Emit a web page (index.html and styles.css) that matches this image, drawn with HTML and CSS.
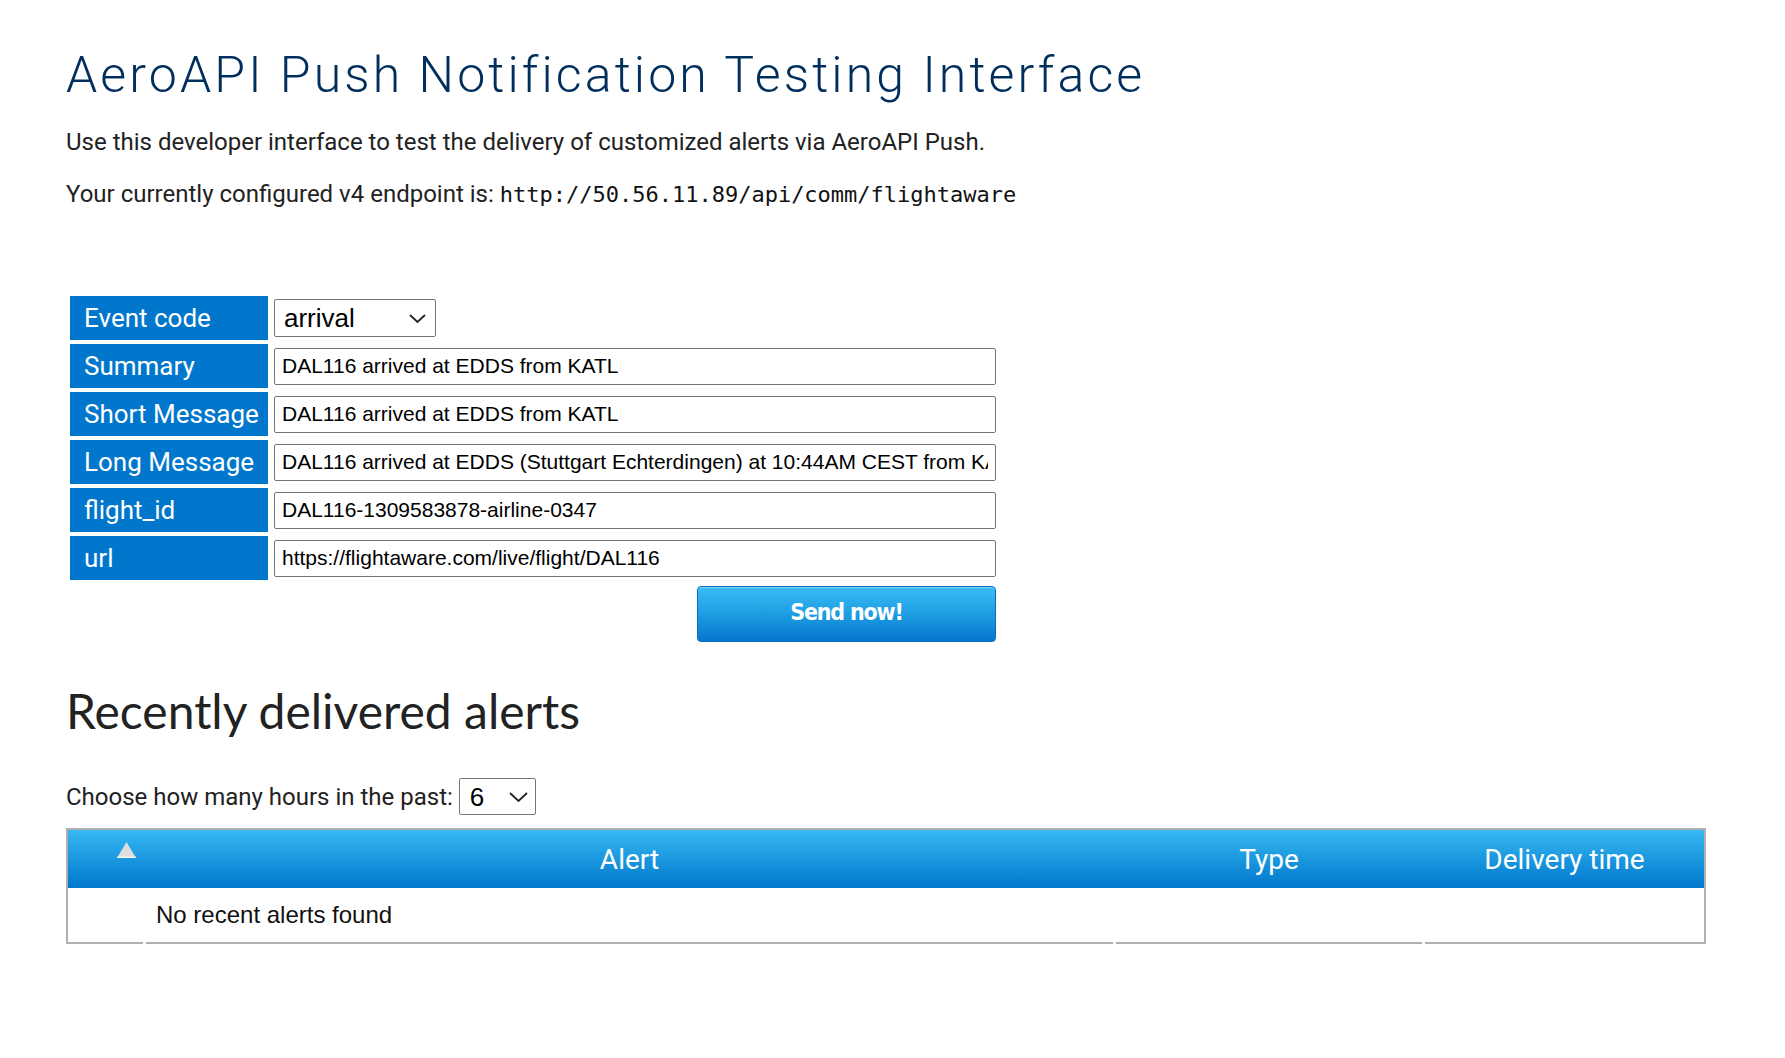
FILE: index.html
```html
<!DOCTYPE html>
<html lang="en">
<head>
<meta charset="utf-8">
<title>AeroAPI Push Notification Testing Interface</title>
<link rel="stylesheet" href="styles.css">
</head>
<body>
<div class="page">
  <h1 class="title">AeroAPI Push Notification Testing Interface</h1>
  <p class="intro">Use this developer interface to test the delivery of customized alerts via AeroAPI Push.</p>
  <p class="intro endpoint">Your currently configured v4 endpoint is: <code class="code">http://50.56.11.89/api/comm/flightaware</code></p>

  <form class="push-form" onsubmit="return false">
    <table class="form-table">
      <tr>
        <th class="label">Event code</th>
        <td class="field">
          <span class="select-wrap">
            <select class="select select-event">
              <option>arrival</option>
              <option>departure</option>
              <option>cancelled</option>
              <option>diverted</option>
              <option>filed</option>
            </select>
            <svg class="chev" width="17" height="9" viewBox="0 0 17 9"><path d="M1 1 L8.5 8 L16 1" fill="none" stroke="#222" stroke-width="1.8"/></svg>
          </span>
        </td>
      </tr>
      <tr>
        <th class="label">Summary</th>
        <td class="field"><input class="text-input" type="text" value="DAL116 arrived at EDDS from KATL"></td>
      </tr>
      <tr>
        <th class="label">Short Message</th>
        <td class="field"><input class="text-input" type="text" value="DAL116 arrived at EDDS from KATL"></td>
      </tr>
      <tr>
        <th class="label">Long Message</th>
        <td class="field"><input class="text-input" type="text" value="DAL116 arrived at EDDS (Stuttgart Echterdingen) at 10:44AM CEST from KATL"></td>
      </tr>
      <tr>
        <th class="label">flight_id</th>
        <td class="field"><input class="text-input" type="text" value="DAL116-1309583878-airline-0347"></td>
      </tr>
      <tr>
        <th class="label">url</th>
        <td class="field"><input class="text-input" type="text" value="https://flightaware.com/live/flight/DAL116"></td>
      </tr>
      <tr>
        <td></td>
        <td class="field"><button class="send-btn" type="submit">Send now!</button></td>
      </tr>
    </table>
  </form>

  <h2 class="section-title">Recently delivered alerts</h2>

  <div class="hours">
    <span class="hours-label">Choose how many hours in the past:</span>
    <span class="select-wrap">
      <select class="select select-hours">
        <option>1</option>
        <option>3</option>
        <option selected>6</option>
        <option>12</option>
        <option>24</option>
      </select>
      <svg class="chev chev-hours" width="19" height="10" viewBox="0 0 19 10"><path d="M1 1 L9.5 9 L18 1" fill="none" stroke="#222" stroke-width="1.8"/></svg>
    </span>
  </div>

  <table class="alerts">
    <colgroup>
      <col class="c-sort">
      <col class="c-alert">
      <col class="c-type">
      <col class="c-time">
    </colgroup>
    <thead>
      <tr>
        <th class="sort-col"><svg width="19" height="16" viewBox="0 0 19 16"><polygon points="9.5,0 19,16 0,16" fill="#dedede"/><rect x="0" y="14.6" width="19" height="1.4" fill="#f4f4f4"/></svg></th>
        <th class="hcell">Alert</th>
        <th class="hcell">Type</th>
        <th class="hcell">Delivery time</th>
      </tr>
    </thead>
    <tbody>
      <tr>
        <td class="bcell first"></td>
        <td class="bcell msg">No recent alerts found</td>
        <td class="bcell"></td>
        <td class="bcell"></td>
      </tr>
    </tbody>
  </table>
</div>
</body>
</html>
```

FILE: styles.css
```css
html, body {
  margin: 0;
  padding: 0;
  background: #ffffff;
}

.page {
  padding: 0 66px;
  font-family: Roboto, "Liberation Sans", sans-serif;
  color: #222222;
}

.title {
  margin: 45px 0 0;
  font-family: Roboto, sans-serif;
  font-weight: 300;
  font-size: 50px;
  line-height: 60px;
  letter-spacing: 3.1px;
  color: #002f5d;
  white-space: nowrap;
}

.intro {
  margin: 21px 0 0;
  font-size: 24px;
  line-height: 33px;
  color: #222222;
}

.endpoint {
  margin-top: 19px;
}

.code {
  font-family: "DejaVu Sans Mono", monospace;
  font-size: 22px;
  line-height: 33px;
  color: #111111;
}

.push-form {
  margin: 0;
}

.form-table {
  margin-top: 81px;
  border-collapse: separate;
  border-spacing: 4px;
  margin-left: 0;
}

.label {
  box-sizing: border-box;
  width: 198px;
  min-width: 198px;
  max-width: 198px;
  height: 44px;
  padding: 0 4px 0 14px;
  background: #0077cc;
  color: #ffffff;
  font-family: Roboto, sans-serif;
  font-weight: 400;
  font-size: 26px;
  text-align: left;
  white-space: nowrap;
  overflow: hidden;
}

.field {
  padding: 0 2px;
  height: 44px;
  vertical-align: middle;
}

.text-input {
  display: block;
  box-sizing: border-box;
  width: 722px;
  height: 37px;
  margin: 0;
  padding: 0 7px;
  border: 1px solid #767676;
  border-radius: 2px;
  background: #ffffff;
  font-family: "Liberation Sans", Arial, sans-serif;
  font-size: 21px;
  color: #000000;
  outline: none;
}

.select-wrap {
  position: relative;
  display: inline-block;
  vertical-align: middle;
}

.select {
  -webkit-appearance: none;
  appearance: none;
  box-sizing: border-box;
  display: block;
  margin: 0;
  border: 1px solid #767676;
  border-radius: 2px;
  background: #ffffff;
  font-family: "Liberation Sans", Arial, sans-serif;
  font-size: 26px;
  color: #000000;
  outline: none;
}

.select-event {
  width: 162px;
  height: 38px;
  padding: 0 30px 0 9px;
}

.select-hours {
  width: 77px;
  height: 37px;
  padding: 0 28px 0 10px;
}

.chev {
  position: absolute;
  right: 10px;
  top: 15px;
  pointer-events: none;
}

.chev-hours {
  right: 8px;
  top: 14px;
}

.send-btn {
  display: block;
  box-sizing: border-box;
  width: 299px;
  height: 56px;
  margin: 2px 0 2px auto;
  padding: 0 0 5px;
  border: 1px solid #0a6cbd;
  border-radius: 4px;
  background: linear-gradient(#3abcf4 0%, #1e9de3 50%, #0677cc 100%);
  box-shadow: inset 0 1px 0 rgba(255, 255, 255, 0.35);
  color: #ffffff;
  font-family: "DejaVu Sans Condensed", "DejaVu Sans", sans-serif;
  font-weight: 700;
  font-size: 23px;
  letter-spacing: -1.2px;
  cursor: pointer;
}

.section-title {
  margin: 34px 0 0;
  font-family: Lato, sans-serif;
  font-weight: 400;
  font-size: 48px;
  line-height: 58px;
  color: #222222;
}

.hours {
  display: flex;
  align-items: center;
  gap: 6px;
  height: 37px;
  margin-top: 38px;
  font-size: 24px;
  color: #222222;
}

.alerts {
  margin-top: 13px;
  width: 1640px;
  table-layout: fixed;
  border-collapse: separate;
  border-spacing: 0;
  border: 2px solid #b0b0b0;
  border-bottom: 0;
}

.c-sort { width: 75px; }
.c-alert { width: 970px; }
.c-type { width: 309px; }
.c-time { width: 282px; }

.alerts th {
  height: 58px;
  padding: 0;
  background: linear-gradient(#36b8f2, #0077cc);
  color: #ffffff;
  font-family: Roboto, sans-serif;
  font-weight: 400;
  font-size: 28px;
}

.alerts th.sort-col {
  vertical-align: top;
  text-align: left;
  padding: 12px 0 0 49px;
  box-sizing: border-box;
}

.sort-col svg {
  display: block;
}

.alerts th.hcell {
  padding-left: 3px;
  text-align: center;
}

.bcell {
  height: 54px;
  padding: 0 0 2px 3px;
  background: linear-gradient(#b0b0b0, #b0b0b0) right bottom / calc(100% - 3px) 2px no-repeat;
  font-family: "Liberation Sans", Arial, sans-serif;
  font-size: 24px;
  color: #111111;
}

.bcell.first {
  padding-left: 0;
  background-size: 100% 2px;
}

.bcell.msg {
  padding-left: 13px;
}
```
